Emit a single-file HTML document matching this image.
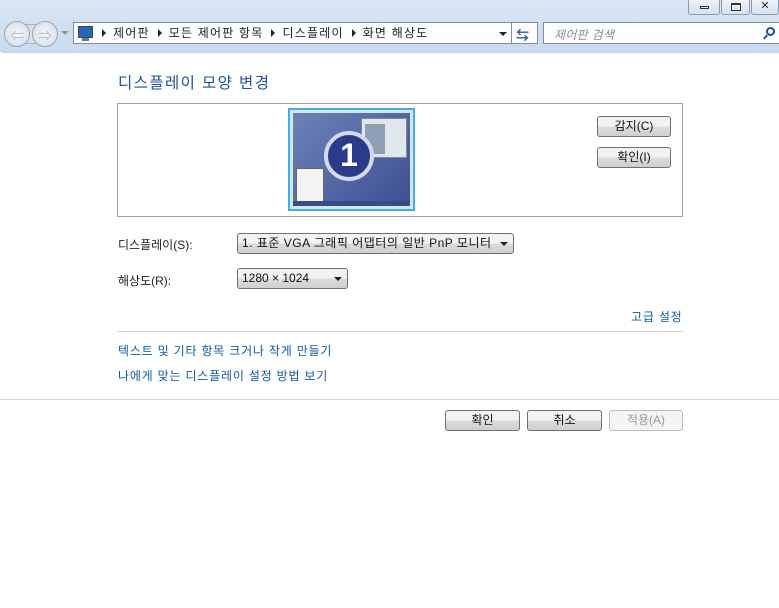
<!DOCTYPE html>
<html><head><meta charset="utf-8"><style>
*{margin:0;padding:0;box-sizing:border-box}
body{width:779px;height:608px;background:#fff;font-family:"Liberation Sans","Noto Sans CJK KR",sans-serif;font-size:12px;color:#1e1e1e;position:relative;overflow:hidden}
.a{position:absolute}
.top{left:0;top:0;width:779px;height:52px;background:linear-gradient(#dbe7f4,#cfdfef 60%,#c8dbee)}
.wb{top:0;height:15px;border:1px solid #8a9bb0;border-top:none;border-radius:0 0 3px 3px;background:linear-gradient(#eef3f9,#d5e1ee)}
.addr{left:73px;top:22px;width:465px;height:22px;background:#fff;border:1px solid #7f8fa3;font-size:12px;color:#222}
.btn{height:21px;border:1px solid #707070;border-radius:3px;background:linear-gradient(#f2f2f2 50%,#dcdcdc 50%,#cfcfcf);text-align:center;line-height:19px;font-size:12px;color:#111}
.link{color:#0d5aa8;font-size:12px;letter-spacing:0.8px}
.tri{display:inline-block;width:0;height:0;border-left:4px solid #222;border-top:4px solid transparent;border-bottom:4px solid transparent;margin:0 7px 0 8px;vertical-align:0px}
.dd{display:inline-block;width:0;height:0;border-top:4px solid #222;border-left:4px solid transparent;border-right:4px solid transparent}
</style></head><body>
<div class="a top"></div>
<div class="a" style="left:2px;top:52px;width:777px;height:556px;background:#fff;border-top:1px solid #c5d3e2"></div>
<div class="a wb" style="left:688px;width:32px"><div class="a" style="left:11px;top:6px;width:9px;height:3px;border:1px solid #333"></div></div>
<div class="a wb" style="left:721px;width:29px"><div class="a" style="left:9px;top:3px;width:10px;height:8px;border:1px solid #333;border-top-width:2px"></div></div>
<div class="a wb" style="left:751px;width:28px;text-align:center;font-size:11px;line-height:13px;color:#333">✕</div>
<div class="a" style="left:14px;top:24px;width:34px;height:20px;background:#d9e0ea;border-top:1px solid #a9b4c2;border-bottom:1px solid #a9b4c2"></div>
<div class="a" style="left:4px;top:21px;width:26px;height:26px;border-radius:50%;border:1px solid #9aa7b6;background:radial-gradient(#f6f8fb,#d3dae4)"></div>
<div class="a" style="left:32px;top:21px;width:26px;height:26px;border-radius:50%;border:1px solid #9aa7b6;background:radial-gradient(#f6f8fb,#d3dae4)"></div>
<div class="a" style="left:10px;top:26px;color:#b8c0cc;font-size:14px">⇐</div>
<div class="a" style="left:38px;top:26px;color:#b8c0cc;font-size:14px">⇒</div>
<div class="a" style="left:61px;top:31px;border-top:4px solid #8a97a8;border-left:4px solid transparent;border-right:4px solid transparent"></div>
<div class="a addr">
 <div class="a" style="left:4px;top:3px;width:15px;height:12px;background:#2a66b8;border:1px solid #3a4a60"></div>
 <div class="a" style="left:8px;top:15px;width:7px;height:3px;background:#6a7a8a"></div>
 <div class="a" style="left:20px;top:3px;white-space:nowrap;line-height:15px;letter-spacing:1.2px"><span class="tri"></span>제어판<span class="tri"></span>모든 제어판 항목<span class="tri"></span>디스플레이<span class="tri"></span>화면 해상도</div>
 <div class="a dd" style="left:425px;top:9px"></div>
 <div class="a" style="left:437px;top:-1px;width:1px;height:22px;background:#7f8fa3"></div>
 <div class="a" style="left:442px;top:2px;color:#1f5fae;font-size:13px;font-weight:bold">⇆</div>
</div>
<div class="a" style="left:543px;top:22px;width:236px;height:22px;background:#fff;border:1px solid #7f8fa3;border-right:none">
 <div class="a" style="left:10px;top:3px;color:#8a8a8a;font-style:italic;letter-spacing:0.3px">제어판 검색</div>
 <div class="a" style="left:222px;top:4px;width:9px;height:9px;border:2px solid #1c4f9a;border-radius:50%"></div>
 <div class="a" style="left:219px;top:13px;width:5px;height:2px;background:#1c4f9a;transform:rotate(-45deg)"></div>
</div>
<div class="a" style="left:118px;top:71px;font-size:15.5px;color:#1e4f9a;letter-spacing:1.4px">디스플레이 모양 변경</div>
<div class="a" style="left:117px;top:103px;width:566px;height:114px;border:1px solid #a0a0a0"></div>
<div class="a" style="left:288px;top:108px;width:127px;height:103px;border:2px solid #4aa9e6;background:#cfe8fa;padding:3px">
 <div style="width:100%;height:100%;background:linear-gradient(135deg,#6e82b8,#3c4f92);position:relative">
  <div class="a" style="left:68px;top:5px;width:46px;height:40px;background:#dfe6ee;border:1px solid #888"><div class="a" style="left:3px;top:5px;width:20px;height:30px;background:#8ea0b6"></div></div>
  <div class="a" style="left:3px;top:55px;width:28px;height:38px;background:#f4f4f4;border:1px solid #666"></div>
  <div class="a" style="left:31px;top:18px;width:50px;height:50px;border-radius:50%;background:#2c3a8a;border:4px solid #d6daf0;color:#fff;font-size:32px;font-weight:bold;text-align:center;line-height:41px">1</div>
  <div class="a" style="left:0;bottom:0;width:100%;height:5px;background:#3a4a86"></div>
 </div>
</div>
<div class="a btn" style="left:597px;top:116px;width:74px">감지(C)</div>
<div class="a btn" style="left:597px;top:147px;width:74px">확인(I)</div>
<div class="a" style="left:118px;top:236px">디스플레이(S):</div>
<div class="a btn" style="left:237px;top:233px;width:277px;text-align:left;padding-left:4px;letter-spacing:0.5px">1. 표준 VGA 그래픽 어댑터의 일반 PnP 모니터<span class="a dd" style="right:5px;top:8px"></span></div>
<div class="a" style="left:118px;top:272px">해상도(R):</div>
<div class="a btn" style="left:237px;top:268px;width:111px;text-align:left;padding-left:4px">1280 × 1024<span class="a dd" style="right:5px;top:8px"></span></div>
<div class="a link" style="left:631px;top:308px">고급 설정</div>
<div class="a" style="left:117px;top:331px;width:566px;height:1px;background:#d5d5d5"></div>
<div class="a link" style="left:118px;top:342px">텍스트 및 기타 항목 크거나 작게 만들기</div>
<div class="a link" style="left:118px;top:367px">나에게 맞는 디스플레이 설정 방법 보기</div>
<div class="a" style="left:0;top:399px;width:779px;height:1px;background:#d5d5d5"></div>
<div class="a btn" style="left:445px;top:410px;width:75px">확인</div>
<div class="a btn" style="left:527px;top:410px;width:75px">취소</div>
<div class="a btn" style="left:609px;top:410px;width:74px;border-color:#bcbcbc;background:#f4f4f4;color:#9a9a9a">적용(A)</div>
</body></html>
